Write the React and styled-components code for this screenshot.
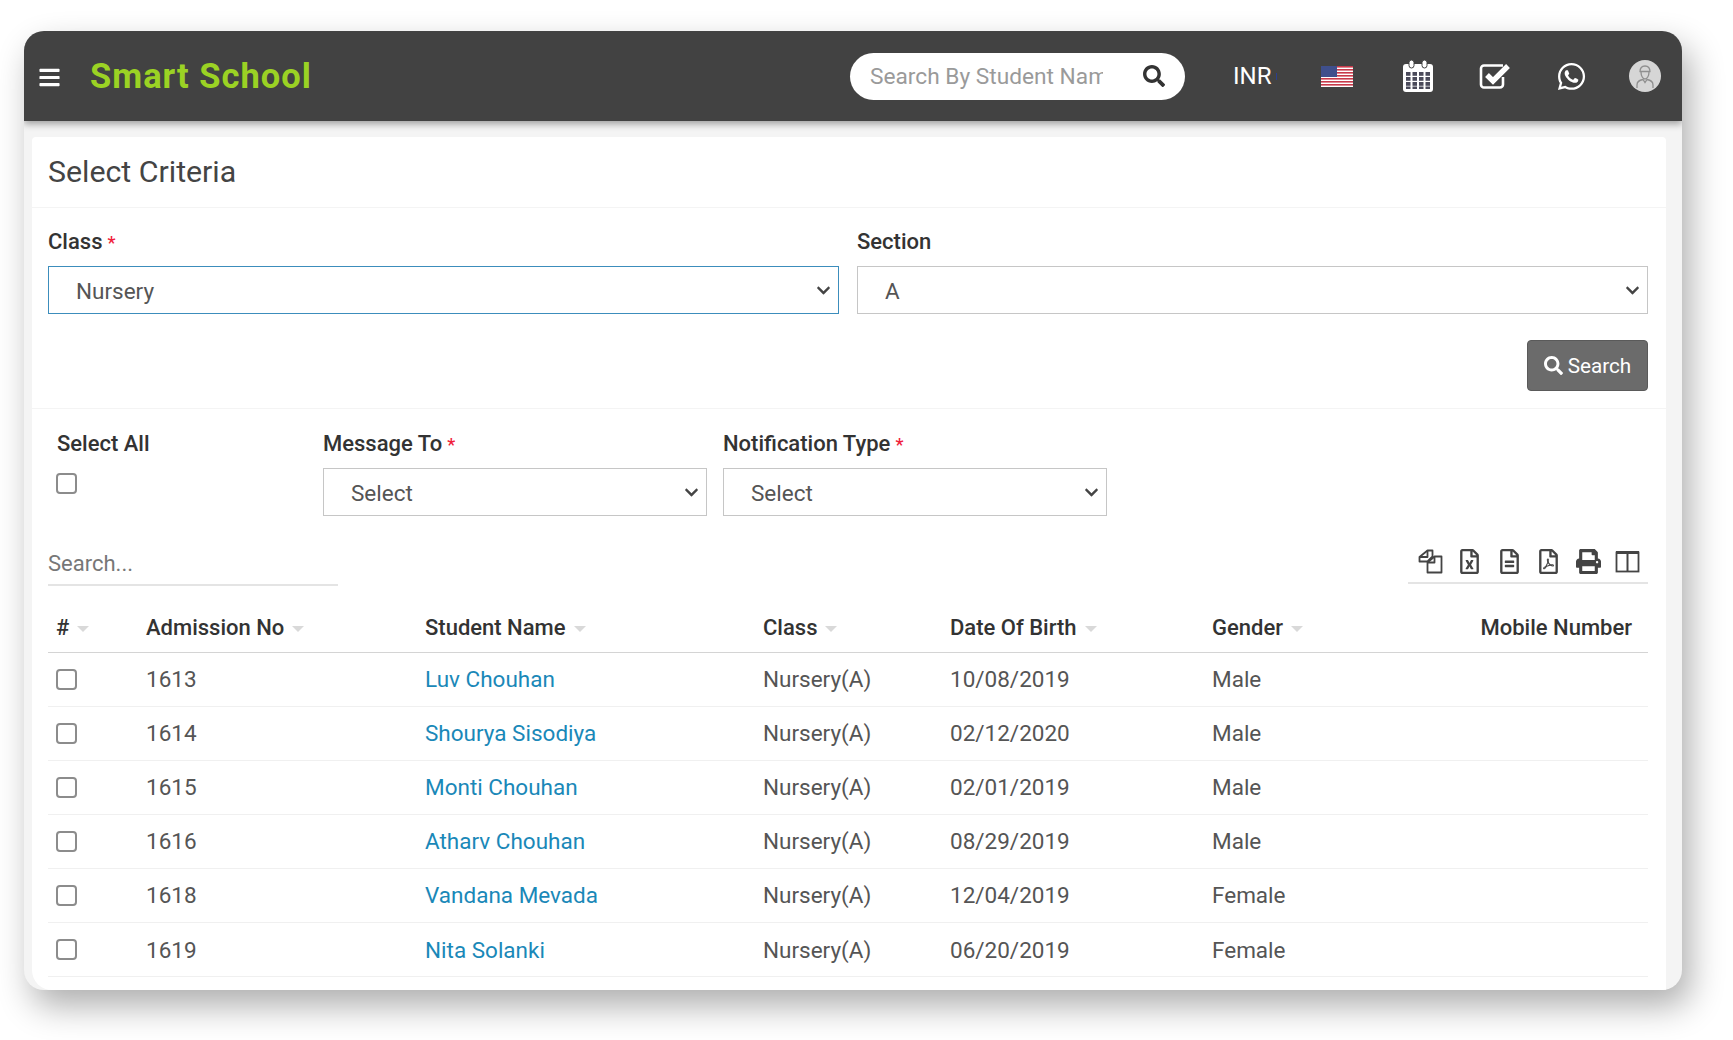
import React from "react";
import styled, { createGlobalStyle } from "styled-components";
import {
  FaBars,
  FaSearch,
  FaWhatsapp,
  FaRegFileExcel,
  FaRegFileAlt,
  FaRegFilePdf,
  FaPrint,
  FaChevronDown
} from "react-icons/fa";

const GlobalStyle = createGlobalStyle`
  html, body {
    margin: 0;
    background: #fff;
    font-family: Roboto, "Liberation Sans", sans-serif;
    color: #444;
  }
  * { box-sizing: border-box; }
`;

const Page = styled.div`
  width: 1733px;
  height: 1040px;
  padding: 31px 0 0 24px;
  overflow: hidden;
`;

const Frame = styled.div`
  width: 1658px;
  height: 959px;
  background: #f4f4f4;
  border-radius: 20px;
  overflow: hidden;
  box-shadow: 8px 16px 34px rgba(0, 0, 0, 0.32);
`;

const TopBar = styled.header`
  position: relative;
  height: 90px;
  background: #424242;
  display: flex;
  align-items: center;
  padding: 0 21px 0 15px;
  box-shadow: 0 3px 7px rgba(0, 0, 0, 0.35);
`;

const MenuButton = styled(FaBars)`
  color: #fff;
  width: 21px;
  height: 23px;
  margin-top: 2px;
`;

const Brand = styled.div`
  margin: 0 0 0 30px;
  font-size: 34.5px;
  font-weight: 700;
  letter-spacing: 1px;
  color: #9bd224;
`;

const NavRight = styled.div`
  margin-left: auto;
  display: flex;
  align-items: center;
`;

const SearchPill = styled.div`
  width: 335px;
  height: 47px;
  border-radius: 24px;
  background: #fff;
  display: flex;
  align-items: center;
  padding: 0 20px 0 20px;
`;

const PillInput = styled.input`
  width: 233px;
  border: 0;
  outline: 0;
  padding: 0;
  font: 400 22.7px Roboto, sans-serif;
  &::placeholder { color: #9a9a9a; opacity: 1; }
`;

const PillIcon = styled(FaSearch)`
  margin-left: auto;
  width: 22px;
  height: 22px;
  color: #333;
`;

const NavItem = styled.div`
  margin-left: ${({ $gap }) => $gap}px;
  display: flex;
  align-items: center;
  color: #fff;
`;

const Currency = styled.span`
  font-size: 24px;
  width: 39px;
`;

const CurrencyMark = styled.i`
  display: block;
  width: 1px;
  height: 7px;
  margin-left: 4px;
  background: #2b3f8f;
`;

const Content = styled.main`
  margin: 16px 16px 0 8px;
  height: 853px;
  background: #fff;
  border-radius: 4px 4px 0 20px;
`;

const CardHeader = styled.h3`
  margin: 0;
  height: 71px;
  padding: 0 16px 1px;
  display: flex;
  align-items: center;
  font-size: 30.3px;
  font-weight: 400;
  color: #444;
  border-bottom: 1px solid #f4f4f4;
`;

const Criteria = styled.section`
  height: 201px;
  padding: 20px 18px 0 16px;
  border-bottom: 1px solid #f4f4f4;
`;

const TwoCols = styled.div`
  display: grid;
  grid-template-columns: 1fr 1fr;
  column-gap: 18px;
`;

const Label = styled.label`
  display: block;
  height: 26px;
  line-height: 28px;
  font-size: 22px;
  font-weight: 500;
  color: #333;
  ${({ $indent }) => $indent && "margin-left: 9px;"}
`;

const Req = styled.span`
  color: #f0203a;
  font-size: 18px;
  margin-left: 5px;
`;

const SelectWrap = styled.div`
  position: relative;
  margin-top: 12px;
  height: 48px;
`;

const Select = styled.select`
  appearance: none;
  width: 100%;
  height: 100%;
  padding: 2px 40px 0 27px;
  background: #fff;
  border: 1px solid ${({ $focused }) => ($focused ? "#3c8dbc" : "#c6c6c6")};
  border-radius: 0;
  outline: 0;
  font: 400 22.5px Roboto, sans-serif;
  color: #555;
`;

const SelectChevron = styled(FaChevronDown)`
  position: absolute;
  right: 7px;
  top: 17px;
  width: 17px;
  height: 15px;
  color: #444;
  pointer-events: none;
`;

const ButtonRow = styled.div`
  margin-top: 26px;
  display: flex;
  justify-content: flex-end;
`;

const SearchButton = styled.button`
  width: 121px;
  height: 51px;
  display: flex;
  align-items: center;
  justify-content: center;
  gap: 5px;
  background: #6b6b6b;
  border: 1px solid #5a5a5a;
  border-radius: 4px;
  color: #fff;
  font: 400 20.7px Roboto, sans-serif;
  padding: 0;
`;

const ButtonIcon = styled(FaSearch)`
  width: 19px;
  height: 19px;
`;

const Messaging = styled.section`
  padding: 21px 16px 0;
  display: grid;
  grid-template-columns: 259px 384px 384px;
  column-gap: 16px;
`;

const Check = styled.input.attrs({ type: "checkbox" })`
  appearance: none;
  display: block;
  margin: 0 0 0 ${({ $left }) => $left}px;
  width: 21px;
  height: 21px;
  background: #fff;
  border: 2px solid #8c8c8c;
  border-radius: 4px;
`;

const SelectAllBox = styled.div`
  margin-top: 17px;
`;

const Toolbar = styled.div`
  margin: 24px 18px 0 16px;
  height: 46px;
  display: flex;
  justify-content: space-between;
`;

const FilterInput = styled.input`
  width: 290px;
  height: 46px;
  padding: 3px 0 0;
  border: 0;
  border-bottom: 2px solid #e4e4e4;
  outline: 0;
  font: 400 22px Roboto, sans-serif;
  &::placeholder { color: #777; opacity: 1; }
`;

const ExportBar = styled.div`
  width: 240px;
  height: 44px;
  display: flex;
  align-items: center;
  justify-content: space-between;
  padding: 0 8px 0 10px;
  border-bottom: 2px solid #e4e4e4;
  color: #444;
  svg { width: 25px; height: 25px; }
`;

const TableWrap = styled.div`
  margin: 13px 16px 0;
`;

const Table = styled.table`
  width: 1600px;
  table-layout: fixed;
  border-collapse: collapse;
`;

const HeadCell = styled.th`
  width: ${({ $w }) => ($w ? `${$w}px` : "auto")};
  height: 53px;
  padding: 4px 16px 0 9px;
  text-align: ${({ $right }) => ($right ? "right" : "left")};
  font-size: 22px;
  font-weight: 500;
  color: #333;
  border-bottom: 1px solid #d4d4d4;
  white-space: nowrap;
  &:first-child { padding-left: 8px; }
`;

const SortMark = styled.i`
  display: inline-block;
  margin-left: 8px;
  vertical-align: 3px;
  border-left: 6px solid transparent;
  border-right: 6px solid transparent;
  border-top: 6px solid #d9d9d9;
`;

const Row = styled.tr`
  height: 54.1px;
`;

const Cell = styled.td`
  padding: 0 9px;
  font-size: 22.5px;
  color: #555;
  border-bottom: 1px solid #f0f0f0;
`;

const StudentLink = styled.a`
  color: #1a88b8;
  text-decoration: none;
`;

// drawn by hand: these glyphs are not in the icon packages in this shape
const TickBox = () => (
  <svg width="33" height="27" viewBox="0 0 33 27" fill="none">
    <path d="M24 14v7.500a3 3 0 0 1-3 3H5a3 3 0 0 1-3-3v-16a3 3 0 0 1 3-3h19" stroke="#fff" strokeWidth="2.600" />
    <path d="M8 12l6 6L29 3" stroke="#fff" strokeWidth="5.400" />
  </svg>
);

const CalendarIcon = () => (
  <svg width="30" height="32" viewBox="0 0 30 32">
    <path d="M3 4h24a3 3 0 0 1 3 3v22a3 3 0 0 1-3 3H3a3 3 0 0 1-3-3V7a3 3 0 0 1 3-3z" fill="#fff" />
    <rect x="6" y="0" width="5" height="8" rx="2.500" fill="#fff" stroke="#424242" strokeWidth="1" />
    <rect x="19" y="0" width="5" height="8" rx="2.500" fill="#fff" stroke="#424242" strokeWidth="1" />
    {[12, 17, 22].map(y =>
      [3, 9.5, 16, 22.5].map(x => <rect key={`${x}-${y}`} x={x} y={y} width="4.500" height="3.800" fill="#4a4a5a" />)
    )}
    {[3, 9.5, 16, 22.5].map(x => (
      <rect key={x} x={x} y="26.500" width="4.500" height="2.500" fill="#4a4a5a" />
    ))}
  </svg>
);

const CopyIcon = () => (
  <svg viewBox="0 0 25 25" fill="none" stroke="#444" strokeWidth="1.800" strokeLinejoin="round">
    <path d="M9.500 1.500h5v6l-5 5H1.500V8z" />
    <path d="M9.500 1.500V8H1.500" />
    <path d="M16.500 7.500h7v16h-14v-10z" fill="#fff" />
    <path d="M16.500 7.500v6h-7" />
  </svg>
);

const ColumnsIcon = () => (
  <svg viewBox="0 0 25 25" fill="none" stroke="#444">
    <rect x="1.500" y="3.500" width="22" height="19" strokeWidth="1.800" />
    <path d="M1 3.500h23" strokeWidth="3" />
    <path d="M12.500 3v19" strokeWidth="2" />
  </svg>
);

const UsFlag = () => (
  <svg width="32" height="21" viewBox="0 0 32 21">
    <rect width="32" height="21" fill="#fff" />
    {[0, 3, 6, 9, 12, 15, 18].map(y => (
      <rect key={y} y={y} width="32" height="1.600" fill="#c8394a" />
    ))}
    <rect width="16" height="11" fill="#3f4f8c" />
  </svg>
);

const Avatar = () => (
  <svg width="32" height="32" viewBox="0 0 32 32" fill="none">
    <circle cx="16" cy="16" r="16" fill="#d6d6d6" />
    <path d="M11 12c0-4 2-6 5-6s5 2 5 6M10.500 11.500h11M12 12c0 4 2 7 4 7s4-3 4-7" stroke="#8f8f8f" strokeWidth="1.300" />
    <path d="M8 28v-3c0-3 3-5 6-5.500l2 3 2-3c3 .5 6 2.500 6 5.500v3" stroke="#8f8f8f" strokeWidth="1.300" />
  </svg>
);

const students = [
  ["1613", "Luv Chouhan", "10/08/2019", "Male"],
  ["1614", "Shourya Sisodiya", "02/12/2020", "Male"],
  ["1615", "Monti Chouhan", "02/01/2019", "Male"],
  ["1616", "Atharv Chouhan", "08/29/2019", "Male"],
  ["1618", "Vandana Mevada", "12/04/2019", "Female"],
  ["1619", "Nita Solanki", "06/20/2019", "Female"]
];

const columns = [
  ["#", 89],
  ["Admission No", 279],
  ["Student Name", 338],
  ["Class", 187],
  ["Date Of Birth", 262],
  ["Gender", 200]
];

const FormSelect = ({ value, focused }) => (
  <SelectWrap>
    <Select $focused={focused} defaultValue={value}>
      <option>{value}</option>
    </Select>
    <SelectChevron />
  </SelectWrap>
);

const App = () => {
  return (
    <Page>
      <GlobalStyle />
      <Frame>
        <TopBar>
          <MenuButton />
          <Brand>Smart School</Brand>
          <NavRight>
            <SearchPill>
              <PillInput placeholder="Search By Student Name" />
              <PillIcon />
            </SearchPill>
            <NavItem $gap={48}>
              <Currency>INR</Currency>
              <CurrencyMark />
            </NavItem>
            <NavItem $gap={44}>
              <UsFlag />
            </NavItem>
            <NavItem $gap={50}>
              <CalendarIcon />
            </NavItem>
            <NavItem $gap={46}>
              <TickBox />
            </NavItem>
            <NavItem $gap={44}>
              <FaWhatsapp size={31} />
            </NavItem>
            <NavItem $gap={42}>
              <Avatar />
            </NavItem>
          </NavRight>
        </TopBar>
        <Content>
          <CardHeader>Select Criteria</CardHeader>
          <Criteria>
            <TwoCols>
              <div>
                <Label>
                  Class<Req>*</Req>
                </Label>
                <FormSelect value="Nursery" focused />
              </div>
              <div>
                <Label>Section</Label>
                <FormSelect value="A" />
              </div>
            </TwoCols>
            <ButtonRow>
              <SearchButton>
                <ButtonIcon />
                Search
              </SearchButton>
            </ButtonRow>
          </Criteria>
          <Messaging>
            <div>
              <Label $indent>Select All</Label>
              <SelectAllBox>
                <Check $left={8} />
              </SelectAllBox>
            </div>
            <div>
              <Label>
                Message To<Req>*</Req>
              </Label>
              <FormSelect value="Select" />
            </div>
            <div>
              <Label>
                Notification Type<Req>*</Req>
              </Label>
              <FormSelect value="Select" />
            </div>
          </Messaging>
          <Toolbar>
            <FilterInput placeholder="Search..." />
            <ExportBar>
              <CopyIcon />
              <FaRegFileExcel />
              <FaRegFileAlt />
              <FaRegFilePdf />
              <FaPrint />
              <ColumnsIcon />
            </ExportBar>
          </Toolbar>
          <TableWrap>
            <Table>
              <thead>
                <tr>
                  {columns.map(([title, w]) => (
                    <HeadCell key={title} $w={w}>
                      {title}
                      <SortMark />
                    </HeadCell>
                  ))}
                  <HeadCell $right>Mobile Number</HeadCell>
                </tr>
              </thead>
              <tbody>
                {students.map(([no, name, dob, gender]) => (
                  <Row key={no}>
                    <Cell>
                      <Check $left={-1} />
                    </Cell>
                    <Cell>{no}</Cell>
                    <Cell>
                      <StudentLink href="#">{name}</StudentLink>
                    </Cell>
                    <Cell>Nursery(A)</Cell>
                    <Cell>{dob}</Cell>
                    <Cell>{gender}</Cell>
                    <Cell />
                  </Row>
                ))}
              </tbody>
            </Table>
          </TableWrap>
        </Content>
      </Frame>
    </Page>
  );
};

export default App;
